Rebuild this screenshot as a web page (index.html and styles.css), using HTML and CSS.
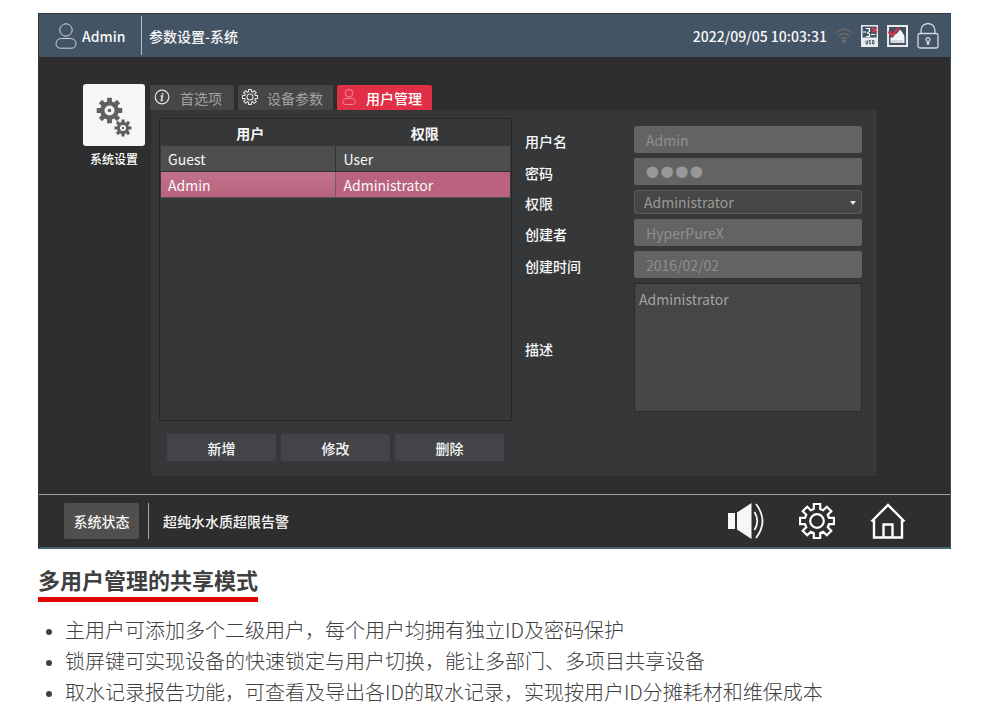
FILE: index.html
```html
<!DOCTYPE html>
<html lang="zh-CN">
<head>
<meta charset="utf-8">
<title>参数设置-系统</title>
<link rel="stylesheet" href="styles.css">
</head>
<body>
<svg class="defs" aria-hidden="true">
  <symbol id="user" viewBox="0 0 22 26">
    <circle cx="11" cy="7" r="6.2"/>
    <path d="M6.500 15.500h9c3.200 0 5.500 2 5.500 5s-1.800 4.700-4.500 4.700H5.500C2.800 25.200 1 23.500 1 20.500s2.300-5 5.500-5z"/>
  </symbol>
  <symbol id="gear" viewBox="-18 -18 36 36">
    <path d="M12-3.200H17V3.200H12L10.700 6.200 14.300 9.800 9.800 14.300 6.200 10.700 3.200 12V17H-3.200V12L-6.200 10.700-9.800 14.300-14.300 9.800-10.700 6.200-12 3.200H-17V-3.200H-12L-10.700-6.200-14.300-9.800-9.800-14.300-6.200-10.700-3.200-12V-17H3.200V-12L6.200-10.700 9.800-14.300 14.300-9.800 10.700-6.200z"/>
    <circle r="6.800"/>
  </symbol>
</svg>
<main class="page">
  <section class="screen">
    <header class="topbar">
      <div class="account"><svg class="icon-user"><use href="#user"/></svg><span>Admin</span></div>
      <h1 class="title">参数设置-系统</h1>
      <div class="status-icons">
        <time>2022/09/05 10:03:31</time>
        <svg class="icon-wifi" viewBox="0 0 16 16"><path d="M0.500 4.500Q8-2 15.500 4.500M2.500 8Q8 3 13.500 8M5 11Q8 8.500 11 11"/><circle cx="8" cy="13.500" r="1.300"/></svg>
        <svg class="icon-usb" viewBox="0 0 17 22"><path fill="#e8ecef" d="M0 0h17v22H0z"/><path fill="#435465" d="M1.500 1.500h14v11h-14z"/><path d="M2 7h3M5 3.500h3.500v3L6.500 7.500 8.500 9v2.500H5M10 9.500h4" stroke="#fff" stroke-width="1.200" fill="none"/><path d="m11 2.500 5 5m0-5-5 5" stroke="#e63350" stroke-width="1.500"/><path d="M5 15.500V19h1.500v-3.500M10 15.500H8v1.700h1.500V19H8M11.500 15.500H13V19h-1.500z" stroke="#56636f" fill="none"/></svg>
        <svg class="icon-chart" viewBox="0 0 21 22"><path fill="#43505f" stroke="#e6e9ed" stroke-width="2" d="M1 1h19v20H1z"/><path fill="#f4f5f6" d="M3.500 12.500H6L8 9.500l2-1 3-4 2 2.500 2 3 .5 2.500V18h-14z"/><path d="M5 18v-3m2 3v-3m2 3v-3m2 3v-3m2 3v-3m2 3v-3" stroke="#9aa2ab" stroke-width=".7"/><path d="m1.500 6.500 3.500 4 6.500-7.500" stroke="#e52f48" stroke-width="2.200" fill="none"/></svg>
        <svg class="icon-lock" viewBox="0 0 22 26"><path d="M4 10V7.500a7 7 0 0 1 14 0V10"/><rect x="1" y="10.500" width="20" height="14.500" rx="2"/><path d="M10.300 18.500a2 2 0 1 1 1.400 0V21h-1.400z"/></svg>
      </div>
    </header>

    <div class="workspace">
      <nav class="side">
        <a class="side-link" href="#settings">
          <span class="side-tile"><svg viewBox="0 0 62 62">
            <g fill="#62605e"><use href="#gear" x="13" y="13" width="27" height="27"/><use href="#gear" x="31" y="35" width="18" height="18"/></g>
            <g fill="#f6f6f6"><circle cx="26.500" cy="26.500" r="5"/><circle cx="40" cy="44" r="3"/></g>
            <g fill="#62605e"><circle cx="26.500" cy="26.500" r="1.800"/><circle cx="40" cy="44" r="1.200"/></g>
          </svg></span>
          <span>系统设置</span>
        </a>
      </nav>
      <div class="content">
        <div class="tabs" role="tablist">
          <button class="tab" role="tab"><svg viewBox="0 0 16 16"><circle cx="8" cy="8" r="6.800"/><path d="M6.500 7h2L7.300 11.500h1.700M8.700 4v1.400" stroke-width="1.500"/></svg>首选项</button>
          <button class="tab" role="tab"><svg class="tab-gear"><use href="#gear"/></svg>设备参数</button>
          <button class="tab tab-active" role="tab" aria-selected="true"><svg class="tab-user"><use href="#user"/></svg>用户管理</button>
        </div>
        <div class="panel">
          <div class="users">
            <div class="table-box">
              <table>
                <thead><tr><th>用户</th><th>权限</th></tr></thead>
                <tbody>
                  <tr><td>Guest</td><td>User</td></tr>
                  <tr class="selected"><td>Admin</td><td>Administrator</td></tr>
                </tbody>
              </table>
            </div>
            <div class="actions"><button>新增</button><button>修改</button><button>删除</button></div>
          </div>
          <form class="details">
            <label for="name">用户名</label><input id="name" type="text" value="Admin" disabled>
            <label for="password">密码</label><input id="password" class="password" type="password" value="0000" disabled>
            <label for="role">权限</label>
            <div class="select-box"><select id="role" disabled><option>Administrator</option></select></div>
            <label for="creator">创建者</label><input id="creator" type="text" value="HyperPureX" disabled>
            <label for="created">创建时间</label><input id="created" type="text" value="2016/02/02" disabled>
            <label for="description">描述</label><textarea id="description" readonly>Administrator</textarea>
          </form>
        </div>
      </div>
    </div>

    <footer class="bottombar">
      <button class="state">系统状态</button>
      <p class="alarm">超纯水水质超限告警</p>
      <div class="shortcuts">
        <button aria-label="声音"><svg viewBox="0 0 36 36"><path d="M0 10h7v16H0zM9 9.500 23.500 0v36L9 26.500z" fill="#f7f7f7"/><path d="M26.500 9q5.500 9 0 18M28 1q13 17 0 34" fill="none" stroke="#f7f7f7" stroke-width="1.800"/></svg></button>
        <button aria-label="设置"><svg class="line-gear"><use href="#gear"/></svg></button>
        <button aria-label="主页"><svg viewBox="0 0 36 36"><path d="M1.500 18.500 18 2l16.500 16.500M4 17v17.500h28V17M13.500 34V21.500h9V34" fill="none" stroke="#fff" stroke-width="2.400"/></svg></button>
      </div>
    </footer>
  </section>

  <article class="notes">
    <h2>多用户管理的共享模式</h2>
    <ul>
      <li>主用户可添加多个二级用户，每个用户均拥有独立ID及密码保护</li>
      <li>锁屏键可实现设备的快速锁定与用户切换，能让多部门、多项目共享设备</li>
      <li>取水记录报告功能，可查看及导出各ID的取水记录，实现按用户ID分摊耗材和维保成本</li>
    </ul>
  </article>
</main>
</body>
</html>
```
FILE: styles.css
```css
* { box-sizing: border-box; }
body {
  margin: 0;
  background: #fff;
  color: #404040;
  font: 400 14px/20px "Noto Sans CJK SC", sans-serif;
}
button, input, select, textarea { font: inherit; color: inherit; margin: 0; border: 0; }
button { padding: 0; background: none; }
svg { display: block; flex: none; }
.defs { position: absolute; width: 0; height: 0; }
.page { padding: 13px 40px 8px 38px; }

.screen {
  background: #2e2e2e;
  color: #f8f8f8;
  border: 1px solid #303338;
  border-right-color: #2b5261;
  border-bottom: 2px solid #48636d;
}

.topbar {
  display: flex;
  align-items: center;
  height: 43px;
  padding-right: 11px;
  background: #435465;
  font-weight: 500;
}
.account {
  display: flex;
  align-items: center;
  gap: 5px;
  width: 103px;
  height: 39px;
  padding-left: 16px;
  border-right: 1px solid #b6bdc4;
}
.icon-user { width: 22px; height: 26px; fill: none; stroke: #d5d9dd; }
.title { margin: 0; padding-left: 7px; font-size: 14px; font-weight: 500; }
.status-icons { display: flex; align-items: center; gap: 9px; margin-left: auto; }
.icon-wifi { width: 16px; height: 16px; fill: #6d6c69; stroke: #6d6c69; stroke-width: 1.3; }
.icon-wifi path { fill: none; }
.icon-usb { width: 17px; height: 22px; }
.icon-chart { width: 21px; height: 22px; }
.icon-lock { width: 22px; height: 26px; fill: none; stroke: #d3d8dc; stroke-width: 1.3; }

.workspace { display: flex; padding: 27px 72px 17px 44px; }
.side { width: 67px; flex: none; }
.side-link {
  display: flex;
  flex-direction: column;
  align-items: center;
  gap: 3px;
  width: 62px;
  color: #fff;
  font-size: 12px;
  font-weight: 500;
  text-decoration: none;
}
.side-tile { width: 62px; height: 62px; border-radius: 3px; background: #f6f6f6; }
.content { flex: 1; }

.tabs { display: flex; gap: 4px; padding-top: 1px; }
.tab {
  display: flex;
  align-items: center;
  gap: 10px;
  height: 25px;
  padding: 0 12px 0 4px;
  border-radius: 2px 2px 0 0;
  background: #464646;
  color: #a2a2a2;
}
.tab svg { width: 16px; height: 16px; margin-bottom: 2px; fill: none; stroke: #e4e4e4; stroke-width: 1.2; }
.tab .tab-gear { stroke-width: 2.4; }
.tab + .tab { gap: 9px; padding-right: 10px; }
.tab .tab-user { stroke: #ef8797; stroke-width: 1.6; }
.tab-active { background: #e22f48; color: #fff; font-weight: 500; }

.panel {
  display: grid;
  grid-template-columns: 353fr 337fr;
  gap: 13px;
  padding: 7px 15px 15px 8px;
  border: 1px solid #292a2b;
  border-top-color: #353638;
  background: #363739;
}
.table-box { min-height: 303px; padding: 0 1px; border: 1px solid #27282a; }
table { width: 100%; border-spacing: 0; table-layout: fixed; }
th { height: 27px; padding: 0 0 0 4px; font-weight: 700; }
td { height: 26px; padding: 0 7px; background: #4e4e4e; border-bottom: 1px solid #303133; }
td:first-child { border-right: 1px solid #303133; }
td + td { padding-left: 8px; }
.selected td { background: #b9637f; border-bottom-color: #555; }
.selected td:first-child { background: linear-gradient(#c2728c, #b9637f); border-right: 1px solid #6a5f65; }
.actions { display: grid; grid-template-columns: repeat(3, 1fr); gap: 5px; margin: 13px 8px 0; }
.actions button { height: 27px; border-radius: 2px; background: #434447; font-weight: 500; }

.details {
  display: grid;
  grid-template-columns: 109px 1fr;
  grid-template-rows: 27px 27px 24px 27px 27px 129px;
  row-gap: 5px;
  align-items: center;
  padding-top: 8px;
}
.details label { padding-top: 2px; font-weight: 500; }
.details input {
  width: 100%;
  height: 27px;
  padding: 0 12px;
  border-radius: 2px;
  background: #636363;
  color: #8f8f8f;
}
.details .password { padding: 0 11px; font-family: "Liberation Sans", sans-serif; font-size: 42px; color: #989898; }
.select-box { position: relative; }
.select-box::after {
  content: "";
  position: absolute;
  top: 11px;
  right: 6px;
  border: 3px solid transparent;
  border-top: 4px solid #eee;
  border-bottom: 0;
}
.details select {
  display: block;
  width: 100%;
  height: 24px;
  padding: 0 9px;
  appearance: none;
  border: 1px solid #5c5c5c;
  border-radius: 2px;
  background: #464646;
  color: #999;
  opacity: 1;
}
.details textarea {
  display: block;
  width: 100%;
  height: 129px;
  padding: 5px 4px;
  resize: none;
  border: 1px solid #2c2c2c;
  background: #464646;
  color: #a3a3a3;
}

.bottombar {
  display: flex;
  align-items: center;
  height: 53px;
  padding: 0 44px 0 25px;
  border-top: 1px solid #a0a0a0;
  font-weight: 500;
}
.state { width: 75px; height: 36px; border-radius: 2px; background: #504f4d; }
.alarm { margin: 0 0 0 9px; padding: 8px 0 8px 14px; border-left: 1px solid #aaa; }
.shortcuts { display: flex; gap: 35px; margin-left: auto; }
.shortcuts svg { width: 36px; height: 36px; }
.line-gear { fill: none; stroke: #fff; stroke-width: 2.2; }

.notes h2 {
  width: fit-content;
  margin: 12px 0 0;
  border-bottom: 5px solid #e60000;
  font-size: 22px;
  line-height: 36px;
  font-weight: 700;
}
.notes ul { margin: 12px 0 0; padding-left: 27px; font-size: 20px; line-height: 31px; font-weight: 300; }
.notes li::marker { font-size: 16px; }
```
